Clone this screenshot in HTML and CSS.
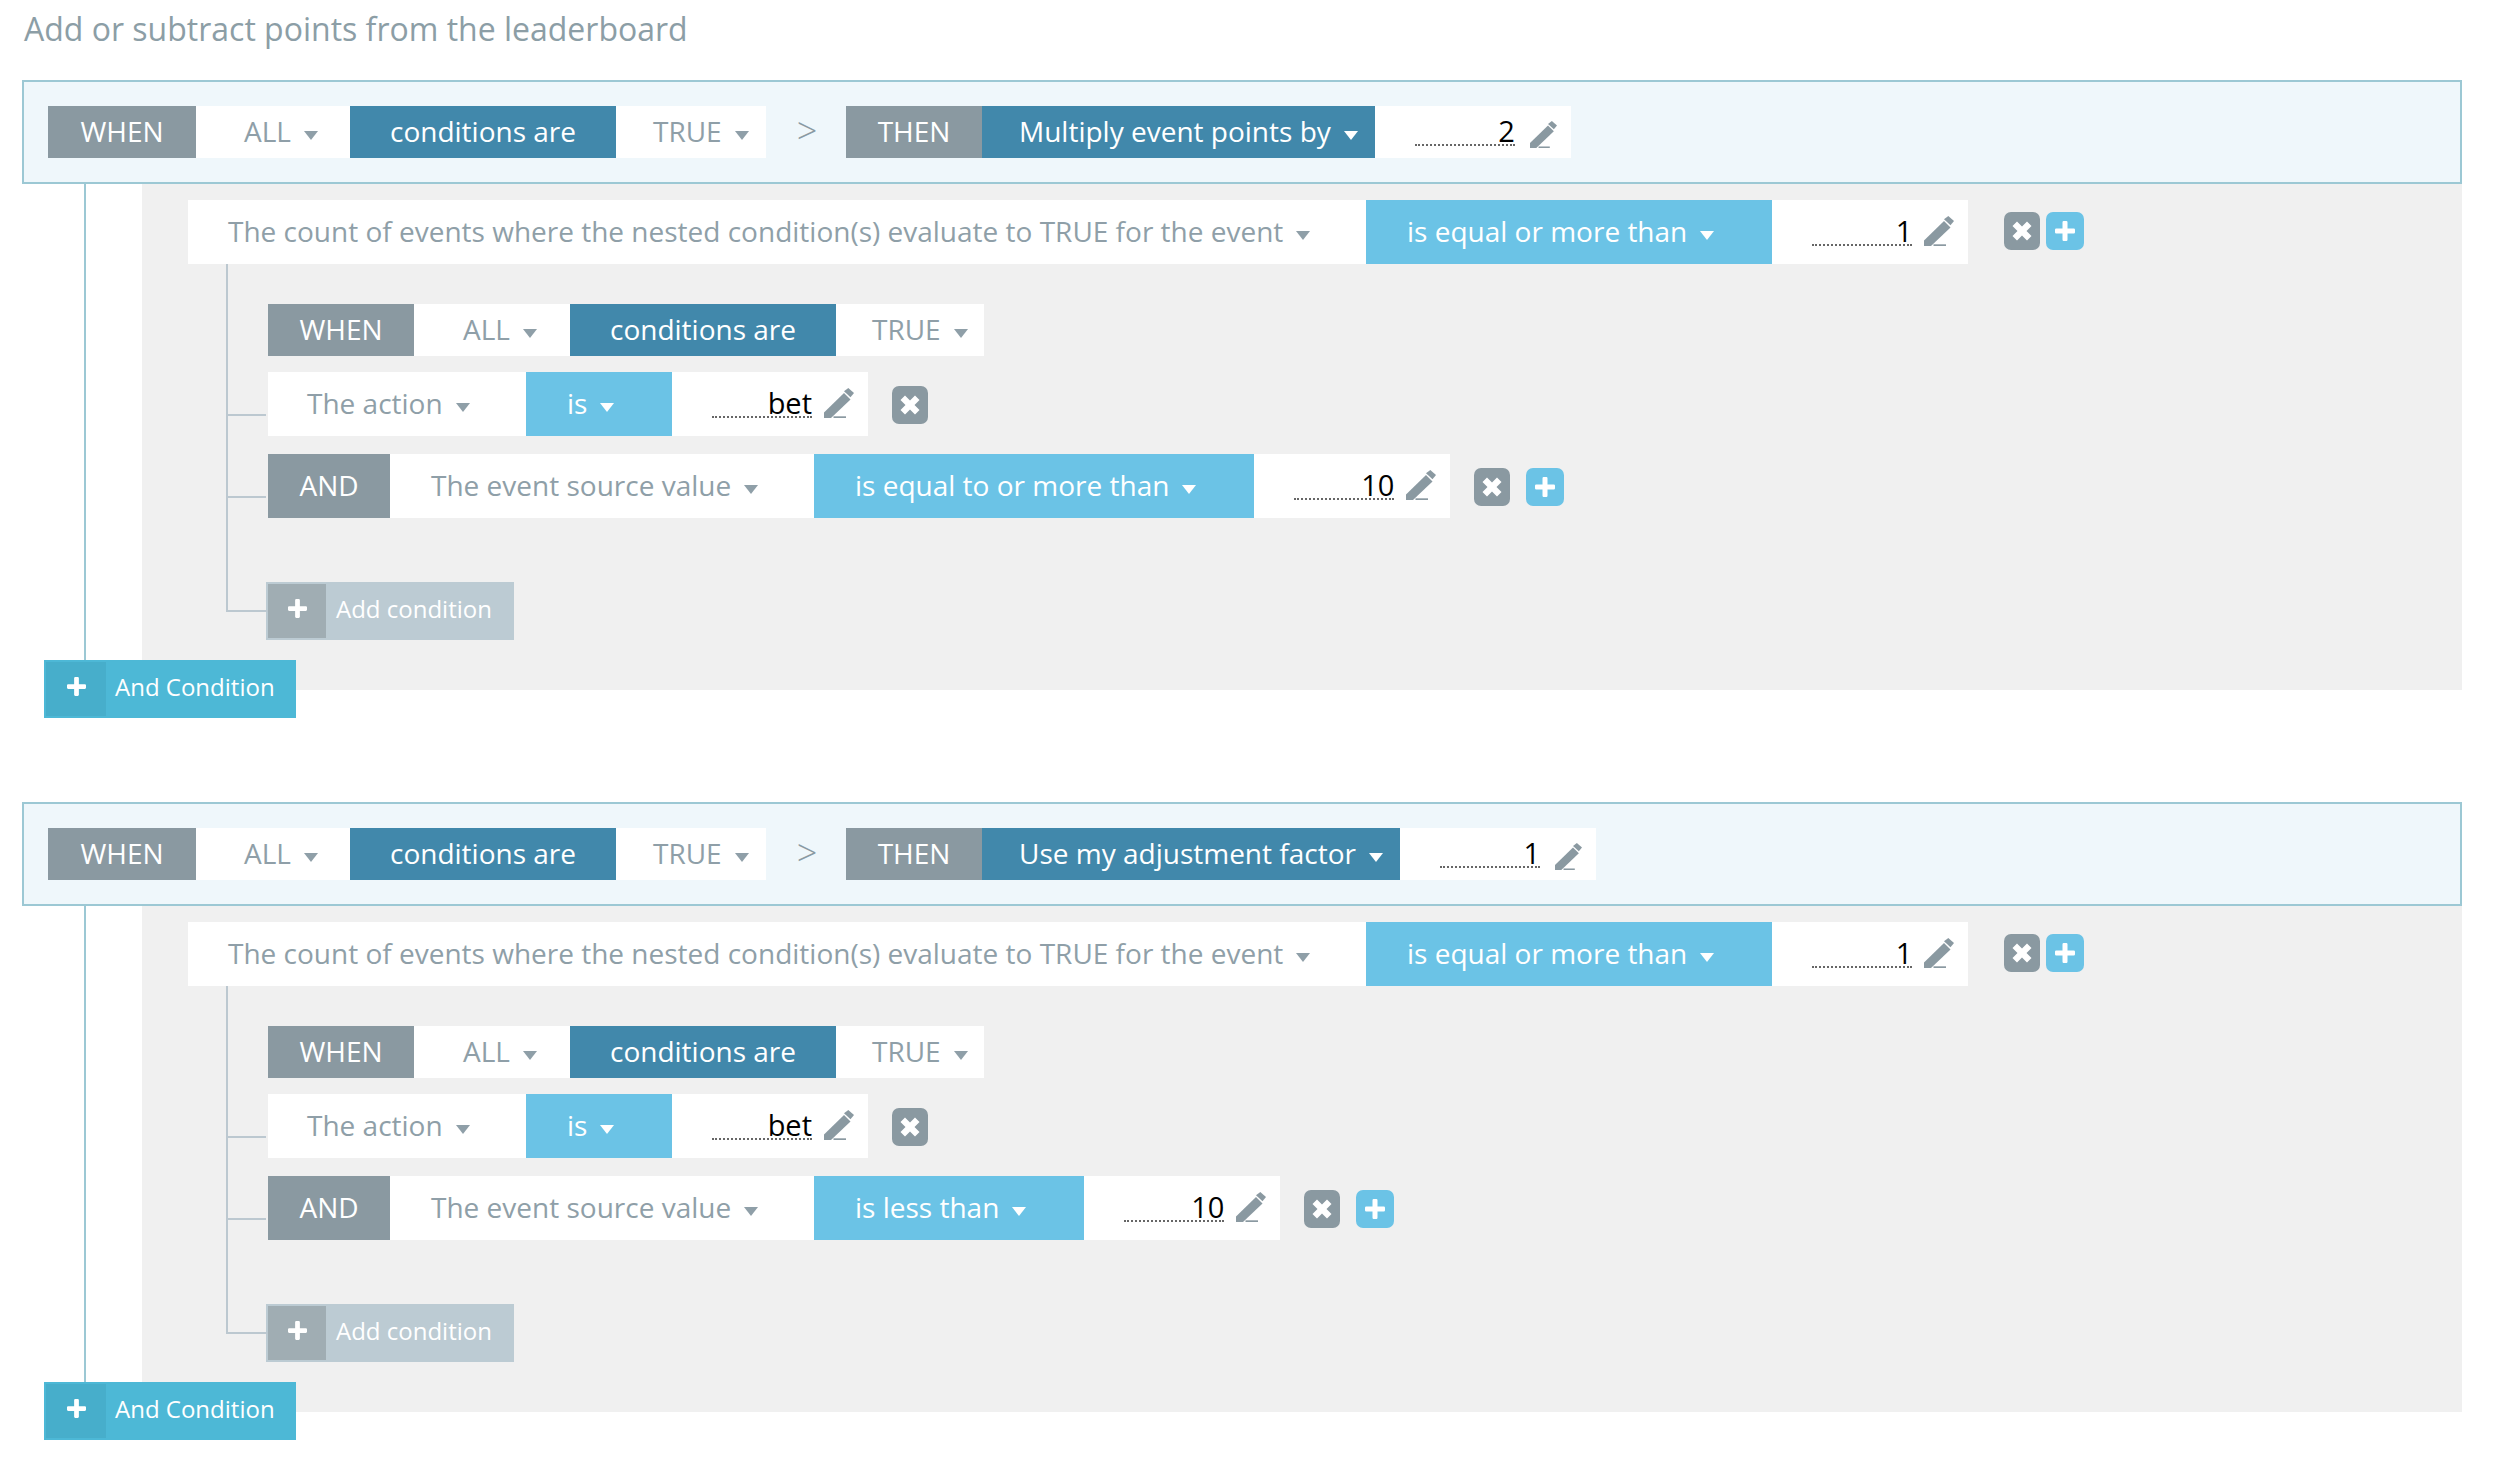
FILE: index.html
```html
<!DOCTYPE html>
<html lang="en">
<head>
<meta charset="utf-8">
<title>Leaderboard rules</title>
<link rel="stylesheet" href="styles.css">
</head>
<body>
<svg class="defs" width="0" height="0" aria-hidden="true">
  <symbol id="pencil" viewBox="0 0 30 30">
    <path d="M0 30V24.500L20 5 26.500 11.500 7 30z"/>
    <path d="M20 3.300L24.300 0 30 5 26.500 9.300z"/>
    <rect x="9.500" y="28.300" width="12.500" height="1.700"/>
  </symbol>
  <symbol id="x" viewBox="0 0 20 20">
    <path d="M.5 5L5 .5 10 5.500 15 .5 19.500 5 14.500 10 19.500 15 15 19.500 10 14.500 5 19.500 .5 15 5.500 10z"/>
  </symbol>
  <symbol id="plus" viewBox="0 0 20 20">
    <path d="M7.500 1.200Q7.500 0 8.700 0h2.600q1.200 0 1.200 1.200V7.500h6.300Q20 7.500 20 8.700v2.600q0 1.200-1.200 1.200H12.500v6.300q0 1.200-1.200 1.200H8.700q-1.200 0-1.200-1.200V12.500H1.200Q0 12.500 0 11.300V8.700Q0 7.500 1.200 7.500h6.300z"/>
  </symbol>
</svg>
<h1 class="title">Add or subtract points from the leaderboard</h1>

<section class="rule">
  <div class="head">
    <span class="seg tag w-when">WHEN</span>
    <span class="seg plain all"><span>ALL</span><i class="caret"></i></span>
    <span class="seg dark cond">conditions are</span>
    <span class="seg plain truth"><span>TRUE</span><i class="caret"></i></span>
    <span class="arrow">&gt;</span>
    <span class="seg tag then">THEN</span>
    <span class="seg dark drop"><span>Multiply event points by</span><i class="caret"></i></span>
    <span class="seg plain value"><span class="val">2</span><svg class="pencil"><use href="#pencil"/></svg></span>
  </div>
  <div class="panel">
    <div class="row tall outer-row">
      <span class="seg plain count"><span>The count of events where the nested condition(s) evaluate to TRUE for the event</span><i class="caret"></i></span>
      <span class="seg light op"><span>is equal or more than</span><i class="caret"></i></span>
      <span class="seg plain value"><span class="val">1</span><svg class="pencil"><use href="#pencil"/></svg></span>
      <span class="btns outer-btns"><span class="btn grey"><svg><use href="#x"/></svg></span><span class="btn blue"><svg><use href="#plus"/></svg></span></span>
    </div>
    <div class="tree">
      <div class="row when-row">
        <span class="seg tag w-when nested">WHEN</span>
        <span class="seg plain all nested-all"><span>ALL</span><i class="caret"></i></span>
        <span class="seg dark cond">conditions are</span>
        <span class="seg plain truth nested-truth"><span>TRUE</span><i class="caret"></i></span>
      </div>
      <div class="row tall branch action-row">
        <span class="seg plain action"><span>The action</span><i class="caret"></i></span>
        <span class="seg light is"><span>is</span><i class="caret"></i></span>
        <span class="seg plain value"><span class="val">bet</span><svg class="pencil"><use href="#pencil"/></svg></span>
        <span class="btns"><span class="btn grey"><svg><use href="#x"/></svg></span></span>
      </div>
      <div class="row tall branch and-row">
        <span class="seg tag and">AND</span>
        <span class="seg plain source"><span>The event source value</span><i class="caret"></i></span>
        <span class="seg light op"><span>is equal to or more than</span><i class="caret"></i></span>
        <span class="seg plain value"><span class="val">10</span><svg class="pencil"><use href="#pencil"/></svg></span>
        <span class="btns"><span class="btn grey"><svg><use href="#x"/></svg></span><span class="btn blue"><svg><use href="#plus"/></svg></span></span>
      </div>
      <div class="add branch"><span class="add-icon"><svg><use href="#plus"/></svg></span><span class="add-text">Add condition</span></div>
    </div>
  </div>
  <div class="and-cond"><span class="and-icon"><svg><use href="#plus"/></svg></span><span class="and-text">And Condition</span></div>
</section>

<section class="rule second">
  <div class="head">
    <span class="seg tag w-when">WHEN</span>
    <span class="seg plain all"><span>ALL</span><i class="caret"></i></span>
    <span class="seg dark cond">conditions are</span>
    <span class="seg plain truth"><span>TRUE</span><i class="caret"></i></span>
    <span class="arrow">&gt;</span>
    <span class="seg tag then">THEN</span>
    <span class="seg dark drop"><span>Use my adjustment factor</span><i class="caret"></i></span>
    <span class="seg plain value"><span class="val">1</span><svg class="pencil"><use href="#pencil"/></svg></span>
  </div>
  <div class="panel">
    <div class="row tall outer-row">
      <span class="seg plain count"><span>The count of events where the nested condition(s) evaluate to TRUE for the event</span><i class="caret"></i></span>
      <span class="seg light op"><span>is equal or more than</span><i class="caret"></i></span>
      <span class="seg plain value"><span class="val">1</span><svg class="pencil"><use href="#pencil"/></svg></span>
      <span class="btns outer-btns"><span class="btn grey"><svg><use href="#x"/></svg></span><span class="btn blue"><svg><use href="#plus"/></svg></span></span>
    </div>
    <div class="tree">
      <div class="row when-row">
        <span class="seg tag w-when nested">WHEN</span>
        <span class="seg plain all nested-all"><span>ALL</span><i class="caret"></i></span>
        <span class="seg dark cond">conditions are</span>
        <span class="seg plain truth nested-truth"><span>TRUE</span><i class="caret"></i></span>
      </div>
      <div class="row tall branch action-row">
        <span class="seg plain action"><span>The action</span><i class="caret"></i></span>
        <span class="seg light is"><span>is</span><i class="caret"></i></span>
        <span class="seg plain value"><span class="val">bet</span><svg class="pencil"><use href="#pencil"/></svg></span>
        <span class="btns"><span class="btn grey"><svg><use href="#x"/></svg></span></span>
      </div>
      <div class="row tall branch and-row">
        <span class="seg tag and">AND</span>
        <span class="seg plain source"><span>The event source value</span><i class="caret"></i></span>
        <span class="seg light op"><span>is less than</span><i class="caret"></i></span>
        <span class="seg plain value"><span class="val">10</span><svg class="pencil"><use href="#pencil"/></svg></span>
        <span class="btns"><span class="btn grey"><svg><use href="#x"/></svg></span><span class="btn blue"><svg><use href="#plus"/></svg></span></span>
      </div>
      <div class="add branch"><span class="add-icon"><svg><use href="#plus"/></svg></span><span class="add-text">Add condition</span></div>
    </div>
  </div>
  <div class="and-cond"><span class="and-icon"><svg><use href="#plus"/></svg></span><span class="and-text">And Condition</span></div>
</section>
</body>
</html>
```
FILE: styles.css
```css
* { box-sizing: border-box; }
html, body { margin: 0; background: #fff; }
body {
  height: 1458px;
  overflow: hidden;
  font-family: "Open Sans", "Liberation Sans", sans-serif;
  font-weight: 400;
  font-size: 28px;
  color: #8f9fa8;
}
.defs { position: absolute; }
.title {
  margin: 0;
  padding: 7px 0 0 24px;
  height: 80px;
  font-size: 32px;
  font-weight: 400;
  line-height: 44px;
  color: #8c9ea6;
}
.rule { position: relative; margin-left: 22px; width: 2440px; height: 638px; }
.second { margin-top: 84px; }
.rule::before {
  content: "";
  position: absolute;
  left: 62px; top: 104px;
  width: 2px; height: 480px;
  background: #9cc8d4;
}
.head {
  height: 104px;
  display: flex;
  align-items: flex-start;
  padding: 24px 0 0 24px;
  background: #eff7fb;
  border: 2px solid #9cc8d4;
}
.seg {
  display: flex;
  align-items: center;
  height: 52px;
  padding-bottom: 2px;
  white-space: nowrap;
  background: #fff;
}
.tall .seg { height: 64px; }
.tag { background: #8a99a1; color: #fff; justify-content: center; }
.dark { background: #4188ab; color: #fff; }
.light { background: #6bc3e6; color: #fff; }
.plain { color: #8f9fa8; }
.w-when { width: 148px; }
.w-when.nested { width: 146px; }
.all { width: 154px; padding-left: 48px; }
.nested-all { width: 156px; padding-left: 49px; }
.cond { width: 266px; justify-content: center; }
.truth { width: 150px; padding-left: 37px; }
.nested-truth { width: 148px; padding-left: 36px; }
.arrow {
  width: 80px;
  padding-left: 2px;
  text-align: center;
  font-size: 36px;
  font-weight: 300;
  line-height: 50px;
  color: #8a9aa3;
}
.then { width: 136px; }
.drop { padding-left: 37px; padding-right: 17px; }
.count { width: 1178px; padding-left: 40px; }
.op { padding-left: 41px; padding-right: 58px; }
.value { width: 196px; padding: 0 0 0 40px; }
.val {
  display: block;
  width: 100px;
  height: 28px;
  text-align: right;
  font-size: 29px;
  line-height: 26px;
  color: #000;
  border-bottom: 2px dotted #666;
}
.pencil { width: 27px; height: 27px; margin: 4px 0 0 15px; fill: #8a99a1; }
.tall .pencil { width: 30px; height: 30px; margin: -2px 0 0 12px; }
.caret {
  display: block;
  width: 0; height: 0;
  margin-left: 13px;
  margin-top: 8px;
  border-left: 7px solid transparent;
  border-right: 7px solid transparent;
  border-top: 9px solid currentColor;
}
.panel {
  margin-left: 120px;
  height: 506px;
  background: #f0f0f0;
  padding: 16px 0 0 46px;
}
.row { display: flex; align-items: flex-start; }
.tree {
  position: relative;
  padding: 40px 0 0 80px;
}
.tree::before {
  content: "";
  position: absolute;
  left: 38px; top: 0;
  width: 2px; height: 348px;
  background: #bcc8d0;
}
.branch { position: relative; }
.branch::before {
  content: "";
  position: absolute;
  left: -40px; top: 42px;
  width: 38px; height: 2px;
  background: #bcc8d0;
}
.add.branch::before { top: 26px; width: 40px; }
.when-row { margin-bottom: 16px; }
.action-row { margin-bottom: 18px; }
.action { width: 258px; padding-left: 39px; }
.is { width: 146px; padding-left: 41px; }
.source { width: 424px; padding-left: 41px; }
.and { width: 122px; }
.btns { display: flex; gap: 16px; margin: 14px 0 0 24px; }
.outer-btns { gap: 6px; margin: 12px 0 0 36px; }
.btn {
  display: flex; align-items: center; justify-content: center;
  width: 38px; height: 38px; border-radius: 7px;
}
.grey { width: 36px; background: #8a99a1; }
.blue { background: #6bc3e6; }
.btn svg { width: 20px; height: 20px; fill: #fff; }
.add {
  display: flex;
  width: 248px; height: 58px;
  margin: 64px 0 0 -2px;
  border: 2px solid #bccbd3;
  background: #bccbd3;
}
.add-icon {
  display: flex; align-items: center; justify-content: center;
  width: 58px; height: 54px;
  padding-bottom: 5px;
  background: #a0adb3;
}
.add-icon svg, .and-icon svg { width: 19px; height: 19px; fill: #fff; }
.add-text { padding-left: 10px; line-height: 50px; font-size: 24px; color: #fff; }
.and-cond {
  position: absolute;
  left: 22px; top: 580px;
  display: flex;
  width: 252px; height: 58px;
  border: 2px solid #4db8d6;
  background: #4db8d6;
}
.and-icon {
  display: flex; align-items: center; justify-content: center;
  width: 60px; height: 54px;
  padding-bottom: 5px;
  background: #47aecb;
}
.and-text { padding-left: 9px; line-height: 50px; font-size: 24px; color: #fff; }
```
